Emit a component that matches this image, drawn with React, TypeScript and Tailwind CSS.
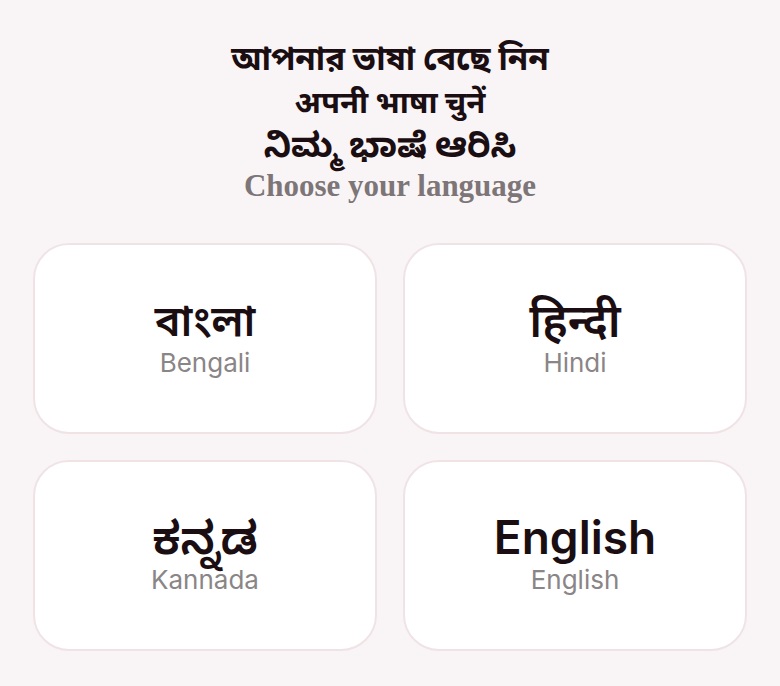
export default function App() {
  const langs = [
    { native: 'বাংলা', name: 'Bengali', size: 'text-[43px]' },
    { native: 'हिन्दी', name: 'Hindi', size: 'text-[46px]' },
    { native: 'ಕನ್ನಡ', name: 'Kannada', size: 'text-[46px]' },
    { native: 'English', name: 'English', size: 'text-[46px]' },
  ]

  return (
    <main className="min-h-screen bg-[#f9f5f6] font-['Inter','Noto_Sans','Noto_Sans_Bengali','Noto_Sans_Devanagari','Noto_Sans_Kannada',sans-serif] text-[#1b0e12]">
      <div className="flex flex-col items-center pt-[37px]">
        <h1 className="text-[33px] leading-[43px] font-bold">আপনার ভাষা বেছে নিন</h1>
        <h1 className="text-[31px] leading-[43px] font-bold">अपनी भाषा चुनें</h1>
        <h1 className="text-[34px] leading-[43px] font-bold">ನಿಮ್ಮ ಭಾಷೆ ಆರಿಸಿ</h1>
        <p className="font-['Liberation_Serif',serif] text-[31px] leading-[40px] font-bold text-[#7d7577]">
          Choose your language
        </p>
      </div>

      <div className="grid grid-cols-2 gap-[26px] px-[33px] pt-[37px]">
        {langs.map(l => (
          <button
            key={l.name}
            className="h-[191px] rounded-[36px] bg-white border-2 border-[#f0e3e6] flex flex-col items-center justify-center pb-[6px]"
          >
            <span className={`${l.size} leading-[54px] font-semibold`}>{l.native}</span>
            <span className="text-[26px] leading-[32px] text-[#8a8586]">{l.name}</span>
          </button>
        ))}
      </div>
    </main>
  )
}
